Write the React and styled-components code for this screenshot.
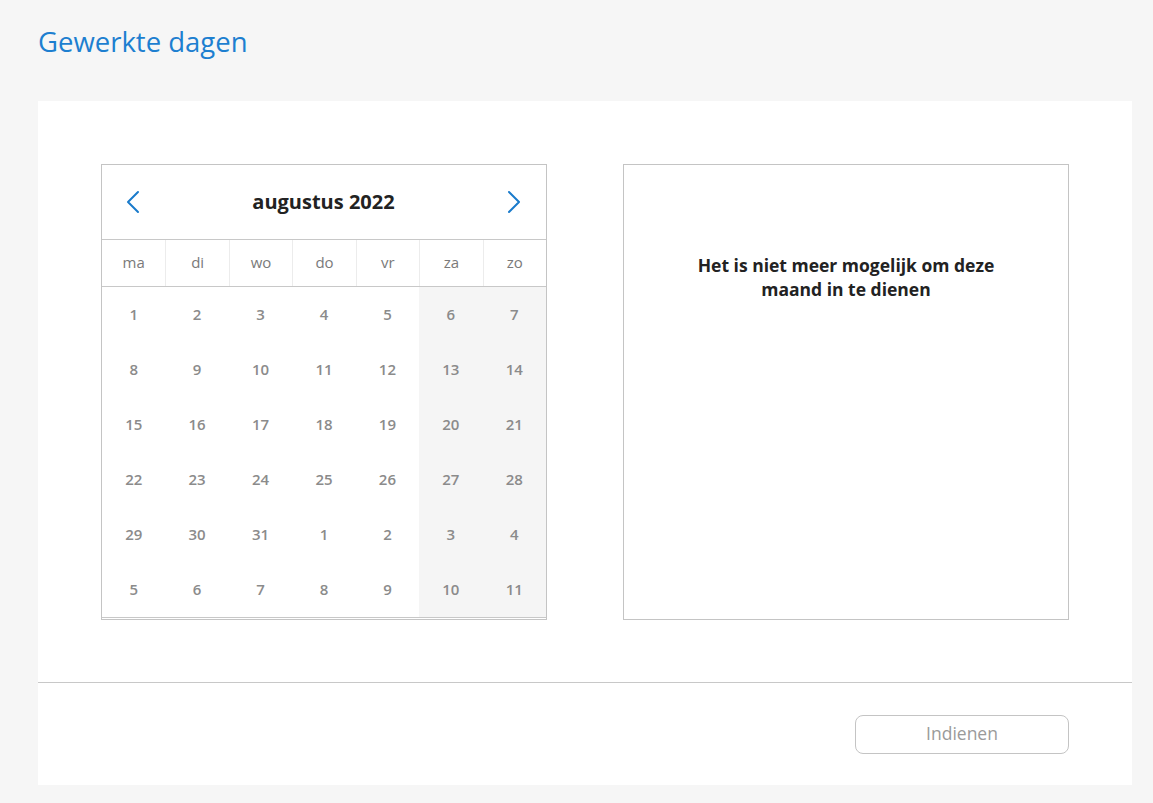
import React from "react";
import styled, { createGlobalStyle } from "styled-components";

const GlobalStyle = createGlobalStyle`
  html, body {
    margin: 0;
    padding: 0;
    background: #f6f6f6;
    font-family: "Open Sans", "Noto Sans", sans-serif;
  }
  * { box-sizing: border-box; }
`;

const Page = styled.div`
  padding: 24px 21px 18px 38px;
  min-height: 803px;
`;

const Title = styled.h1`
  margin: 0 0 41px;
  font-size: 27.5px;
  line-height: 36px;
  font-weight: 400;
  color: #1d7fd0;
`;

const Panel = styled.section`
  background: #fff;
`;

const Content = styled.div`
  display: grid;
  grid-template-columns: 446px 446px;
  justify-content: space-between;
  padding: 63px 63px 62px;
  border-bottom: 1px solid #c8c8c8;
`;

const Footer = styled.div`
  display: flex;
  justify-content: flex-end;
  padding: 32px 63px 31px;
`;

const Button = styled.button`
  width: 214px;
  height: 39px;
  padding: 0 0 1px;
  line-height: 1;
  border: 1px solid #c4c4c4;
  border-radius: 8px;
  background: #fff;
  color: #9a9a9a;
  font-family: "Open Sans", sans-serif;
  font-size: 17.5px;
`;

const Calendar = styled.div`
  border: 1px solid #c4c4c4;
  padding-bottom: 1px;
`;

const Header = styled.div`
  height: 75px;
  display: flex;
  align-items: center;
  justify-content: space-between;
  padding: 0 25px 1px 24px;
  border-bottom: 1px solid #c8c8c8;
`;

const Month = styled.div`
  font-size: 20px;
  font-weight: 700;
  color: #222;
`;

const NavButton = styled.span`
  display: flex;
  width: 14px;
  height: 24px;
  color: #1a7bcb;
`;

const Grid = styled.div`
  display: grid;
  grid-template-columns: repeat(7, 1fr);
`;

const Weekdays = styled(Grid)`
  height: 47px;
  border-bottom: 1px solid #c8c8c8;
`;

const Weekday = styled.div`
  display: flex;
  align-items: center;
  justify-content: center;
  padding-bottom: 3px;
  font-size: 15px;
  color: #7a7a7a;
  border-left: ${(p) => (p.$first ? "none" : "1px solid #ececec")};
`;

const Days = styled(Grid)`
  border-bottom: 1px solid #c8c8c8;
`;

const Day = styled.div`
  height: 55px;
  display: flex;
  align-items: center;
  justify-content: center;
  padding-bottom: 2px;
  font-size: 15px;
  font-weight: 600;
  color: #8b8b8b;
  background: ${(p) => (p.$weekend ? "#f5f5f5" : "#fff")};
`;

const InfoBox = styled.div`
  border: 1px solid #c4c4c4;
  padding-top: 88px;
`;

const InfoText = styled.p`
  margin: 0 auto;
  max-width: 320px;
  text-align: center;
  font-size: 17.5px;
  line-height: 24px;
  font-weight: 700;
  color: #222;
`;

const Chevron = ({ dir }) => (
  <svg width="14" height="24" viewBox="0 0 14 24" fill="none">
    <polyline
      points={dir === "left" ? "12,2 2,12 12,22" : "2,2 12,12 2,22"}
      stroke="currentColor"
      strokeWidth="2"
      strokeLinecap="round"
      strokeLinejoin="round"
    />
  </svg>
);

const weekdays = ["ma", "di", "wo", "do", "vr", "za", "zo"];
const days = [
  ...Array.from({ length: 31 }, (_, i) => i + 1),
  ...Array.from({ length: 11 }, (_, i) => i + 1),
];

export default function App() {
  return (
    <>
      <GlobalStyle />
      <Page>
        <Title>Gewerkte dagen</Title>
        <Panel>
          <Content>
            <Calendar>
              <Header>
                <NavButton>
                  <Chevron dir="left" />
                </NavButton>
                <Month>augustus 2022</Month>
                <NavButton>
                  <Chevron dir="right" />
                </NavButton>
              </Header>
              <Weekdays>
                {weekdays.map((d, i) => (
                  <Weekday key={d} $first={i === 0}>
                    {d}
                  </Weekday>
                ))}
              </Weekdays>
              <Days>
                {days.map((d, i) => (
                  <Day key={i} $weekend={i % 7 >= 5}>
                    {d}
                  </Day>
                ))}
              </Days>
            </Calendar>
            <InfoBox>
              <InfoText>Het is niet meer mogelijk om deze maand in te dienen</InfoText>
            </InfoBox>
          </Content>
          <Footer>
            <Button>Indienen</Button>
          </Footer>
        </Panel>
      </Page>
    </>
  );
}
